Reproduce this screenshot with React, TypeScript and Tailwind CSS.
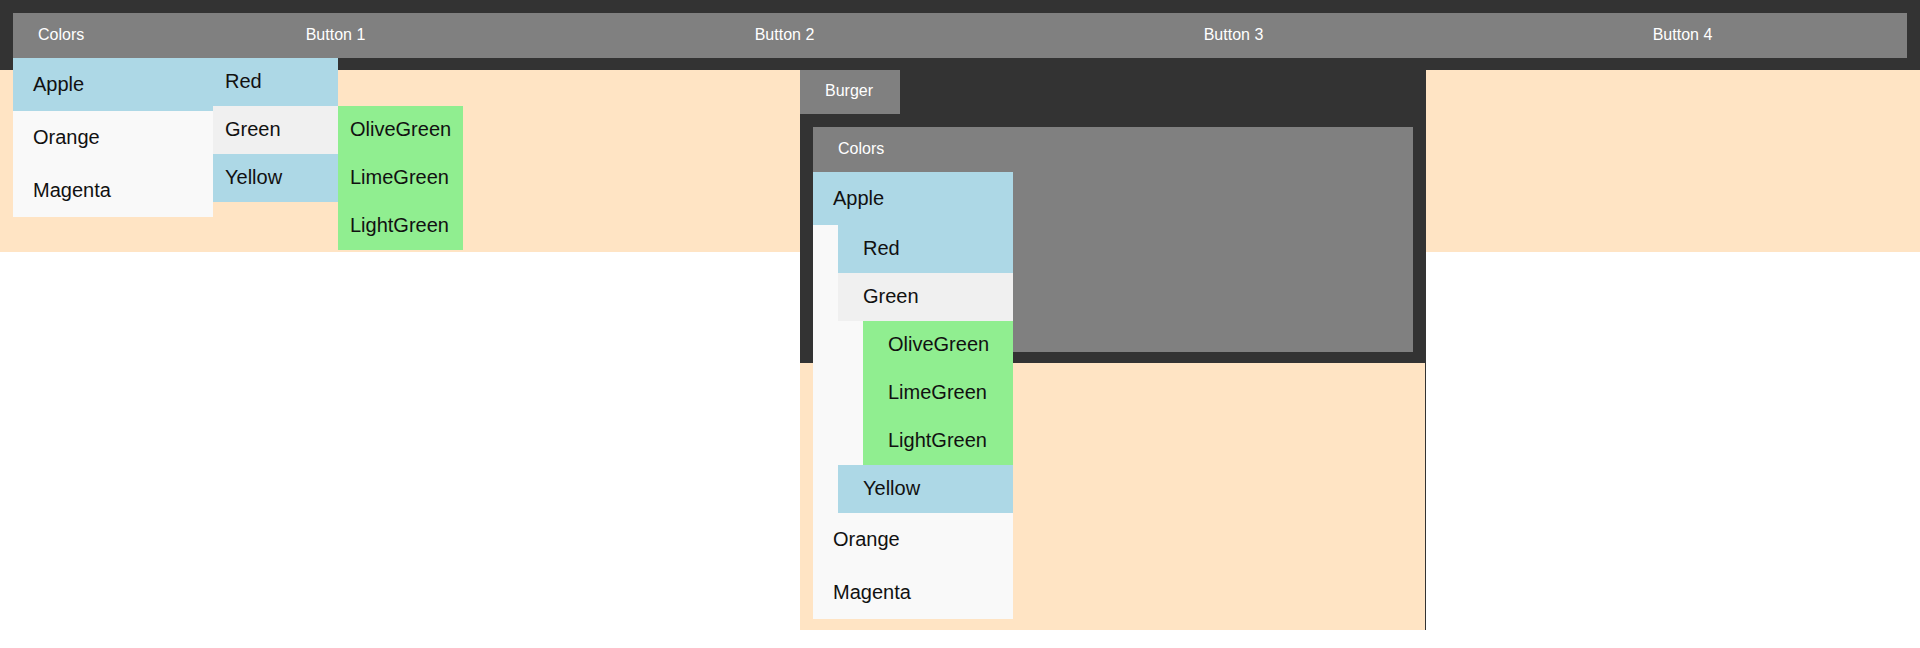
const navButtons = ['Button 1', 'Button 2', 'Button 3', 'Button 4']
const greens = ['OliveGreen', 'LimeGreen', 'LightGreen']

function NavDropdown() {
  return (
    <div className="absolute left-0 top-full w-[200px] bg-[#f9f9f9] pb-0 text-[20px] text-[#111]">
      <div className="relative flex h-[53px] items-center bg-[#add8e6] pb-[2px] pl-5">
        Apple
        <div className="absolute left-full top-0 w-[125px]">
          <div className="flex h-[48px] items-center bg-[#add8e6] pb-[2px] pl-3">Red</div>
          <div className="relative flex h-[48px] items-center bg-[#f0f0f0] pb-[2px] pl-3">
            Green
            <div className="absolute left-full top-0 w-[125px] bg-[#90ee90]">
              {greens.map((g) => (
                <div key={g} className="flex h-[48px] items-center pb-[2px] pl-3">
                  {g}
                </div>
              ))}
            </div>
          </div>
          <div className="flex h-[48px] items-center bg-[#add8e6] pb-[2px] pl-3">Yellow</div>
        </div>
      </div>
      <div className="flex h-[53px] items-center pb-[2px] pl-5">Orange</div>
      <div className="flex h-[53px] items-center pb-[2px] pl-5">Magenta</div>
    </div>
  )
}

function BurgerDropdown() {
  return (
    <div className="absolute left-0 top-[45px] w-[200px] bg-[#f9f9f9] text-[20px] text-[#111]">
      <div className="flex h-[53px] items-center bg-[#add8e6] pb-[2px] pl-5">Apple</div>
      <div className="pl-[25px]">
        <div className="flex h-[48px] items-center bg-[#add8e6] pb-[2px] pl-[25px]">Red</div>
        <div className="flex h-[48px] items-center bg-[#f0f0f0] pb-[2px] pl-[25px]">Green</div>
        <div className="pl-[25px]">
          {greens.map((g) => (
            <div key={g} className="flex h-[48px] items-center bg-[#90ee90] pb-[2px] pl-[25px]">
              {g}
            </div>
          ))}
        </div>
        <div className="flex h-[48px] items-center bg-[#add8e6] pb-[2px] pl-[25px]">Yellow</div>
      </div>
      <div className="flex h-[53px] items-center pb-[2px] pl-5">Orange</div>
      <div className="flex h-[53px] items-center pb-[2px] pl-5">Magenta</div>
    </div>
  )
}

export default function App() {
  return (
    <div className="min-h-[648px] bg-white font-['Liberation_Sans',Arial,sans-serif]">
      <header className="relative z-20 bg-[#333] px-[13px] pb-[12px] pt-[13px]">
        <nav className="flex h-[45px] bg-[#808080] text-base text-white">
          <div className="relative flex w-[98px] items-center pb-[2px] pl-[25px]">
            Colors
            <NavDropdown />
          </div>
          {navButtons.map((b) => (
            <div key={b} className="flex flex-1 items-center justify-center pb-[2px]">
              {b}
            </div>
          ))}
        </nav>
      </header>

      <div className="flex items-start">
        <div className="h-[182px] w-[800px] bg-[#ffe4c4]" />
        <div className="h-[560px] w-[626px] border-r border-[#333] bg-[#ffe4c4]">
          <div className="h-[294px] bg-[#333]">
            <div className="-mt-px flex h-[45px] w-[100px] items-center bg-[#808080] pb-[2px] pl-[25px] text-base text-white">
              Burger
            </div>
            <div className="relative z-10 ml-[13px] mr-[12px] mt-[13px] h-[225px] bg-[#808080]">
              <div className="flex h-[45px] items-center pb-[2px] pl-[25px] text-base text-white">Colors</div>
              <BurgerDropdown />
            </div>
          </div>
        </div>
        <div className="h-[182px] flex-1 bg-[#ffe4c4]" />
      </div>
    </div>
  )
}
